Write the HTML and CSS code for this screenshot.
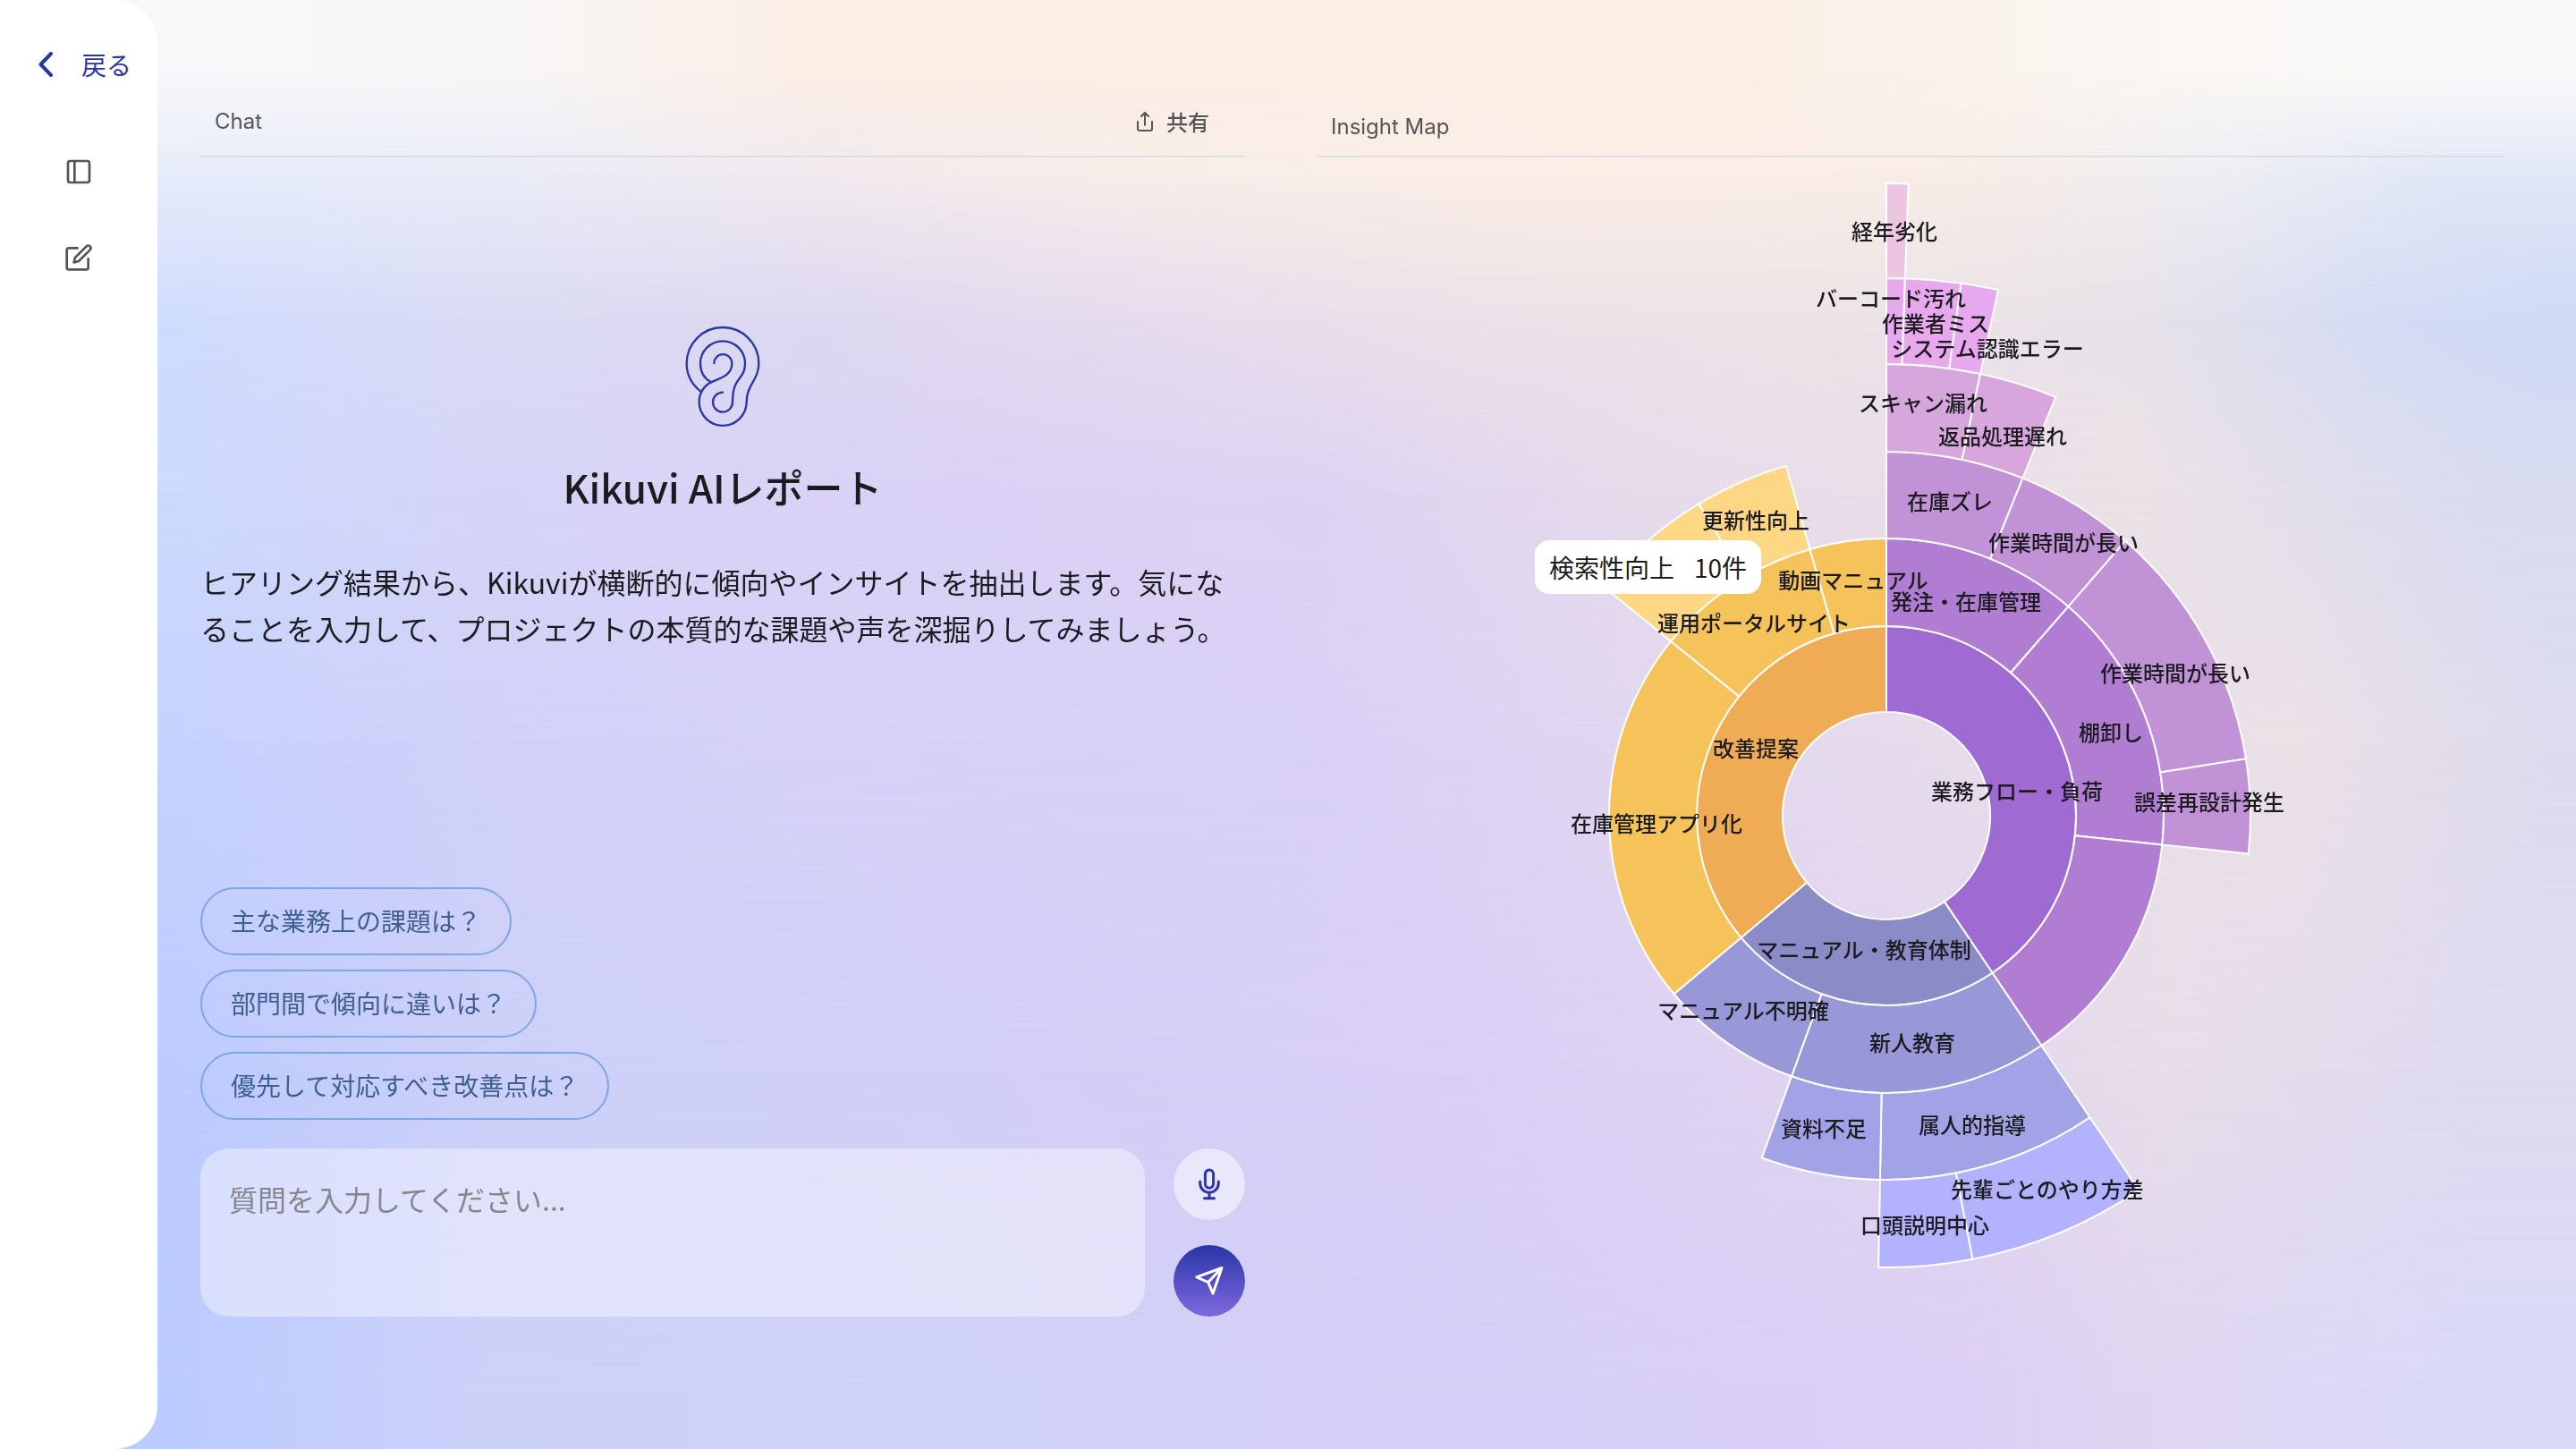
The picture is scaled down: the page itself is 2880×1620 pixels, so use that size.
FILE: index.html
```html
<!DOCTYPE html>
<html lang="ja">
<head>
<meta charset="utf-8">
<meta name="viewport" content="width=device-width, initial-scale=1">
<title>Kikuvi AIレポート</title>
<link rel="stylesheet" href="styles.css">
</head>
<body>
<div class="backdrop" aria-hidden="true">
  <i class="wash wash-1"></i>
  <i class="wash wash-2"></i>
  <i class="wash wash-3"></i>
  <i class="wash wash-4"></i>
  <i class="wash wash-5"></i>
  <i class="wash wash-6"></i>
  <i class="wash wash-7"></i>
</div>
<div class="app">
  <nav class="sidebar">
    <a class="back" href="#">
      <svg class="back-icon" viewBox="0 0 16 28" aria-hidden="true"><path d="M14 2 2.500 14 14 26"/></svg>
      <span>戻る</span>
    </a>
    <button class="tool" type="button" aria-label="サイドパネル">
      <svg viewBox="0 0 24 24" aria-hidden="true"><rect x="3" y="3" width="18" height="18" rx="1.800"/><path d="M8.500 3v18"/></svg>
    </button>
    <button class="tool" type="button" aria-label="新規チャット">
      <svg viewBox="0 0 24 24" aria-hidden="true"><path d="M11 4H3.500A1.500 1.500 0 0 0 2 5.500v15A1.500 1.500 0 0 0 3.500 22h15a1.500 1.500 0 0 0 1.500-1.500V13"/><path d="M18.500 2.500a2.121 2.121 0 0 1 3 3L12 15l-4 1 1-4z"/></svg>
    </button>
  </nav>

  <main class="content">
    <section class="panel chat">
      <header class="panel-head">
        <h2 class="panel-title">Chat</h2>
        <button class="share" type="button">
          <svg viewBox="0 0 24 24" aria-hidden="true"><path d="M4 12v8a2 2 0 0 0 2 2h12a2 2 0 0 0 2-2v-8M12 16V2M8 6l4-4 4 4"/></svg>
          共有
        </button>
      </header>

      <div class="intro">
        <svg class="ear" viewBox="78 72 252 342" aria-hidden="true">
          <path d="M130 293C101 270 83 236 83 199A121 121 0 0 1 325 199C325 255 284 270 284 328A79.500 79.500 0 0 1 125 328C125 300 140 274 165 262C195 248 235 240 235 199A30 30 0 0 0 175 198"/>
          <path d="M165 262C142 250 129 226 129 199A75 75 0 0 1 279 199C279 256 237 240 237 328A33 33 0 1 1 204 296"/>
        </svg>
        <h1 class="title">Kikuvi AIレポート</h1>
        <p class="lead">ヒアリング結果から、Kikuviが横断的に傾向やインサイトを抽出します。気になることを入力して、プロジェクトの本質的な課題や声を深掘りしてみましょう。</p>
      </div>

      <div class="suggestions">
        <button class="chip" type="button">主な業務上の課題は？</button>
        <button class="chip" type="button">部門間で傾向に違いは？</button>
        <button class="chip" type="button">優先して対応すべき改善点は？</button>
      </div>

      <form class="composer">
        <textarea class="question" aria-label="質問" placeholder="質問を入力してください..."></textarea>
        <div class="actions">
          <button class="round mic" type="button" aria-label="音声入力">
            <svg viewBox="0 0 40 40" aria-hidden="true"><rect x="15.400" y="4" width="9.200" height="20.200" rx="4.600"/><path d="M9.700 17v2a10.300 10.300 0 0 0 20.600 0v-2M20 29.500v6M14.500 35.700h11"/></svg>
          </button>
          <button class="round send" type="submit" aria-label="送信">
            <svg viewBox="0 0 40 40" aria-hidden="true"><path d="M34 5.500 5.800 15.800l12.900 5.700L24 34.200zM34 5.500 18.700 21.500"/></svg>
          </button>
        </div>
      </form>
    </section>

    <section class="panel map">
      <header class="panel-head map-head">
        <h2 class="panel-title">Insight Map</h2>
      </header>
      <div class="chart">
        <svg class="sunburst" id="sunburst" viewBox="-637 -736 1328 1290" role="img" aria-label="Insight Map"></svg>
        <div class="tooltip"><span>検索性向上</span><span>10件</span></div>
      </div>
    </section>
  </main>
</div>
<script src="chart.js"></script>
</body>
</html>
```
FILE: styles.css
```css
* {
  box-sizing: border-box;
}

body {
  margin: 0;
  color: #1c1c20;
  font-family: "Noto Sans CJK JP", "Noto Sans", sans-serif;
  background: #d6d0f6;
}

button,
textarea {
  margin: 0;
  padding: 0;
  border: 0;
  background: none;
  color: inherit;
  font: inherit;
}

button {
  cursor: pointer;
}

svg {
  display: block;
  fill: none;
  stroke: currentColor;
  stroke-linecap: round;
  stroke-linejoin: round;
}

/* Background: horizontal colour bands that fade into each other downwards */
.backdrop {
  position: fixed;
  inset: 0;
  z-index: -1;
}

.wash {
  position: absolute;
  inset: 0;
}

.wash-1 {
  background: linear-gradient(90deg, #f8f8fa 6%, #f8f6f6 20%, #fbeee4 32%, #fbeee5 51%, #fbefe4 68%, #faf6f2 82%, #fafafa 95%);
}

.wash-2 {
  background: linear-gradient(90deg, #e6ecfa 7%, #e9ecf7 19%, #f1eaee 32%, #f8ede8 45%, #fbeee5 62%, #f8ede6 76%, #edeef3 86%, #e0e7f5 95%);
  mask-image: linear-gradient(transparent 5%, #000 12%);
}

.wash-3 {
  background: linear-gradient(90deg, #cfdcfd 7%, #dadbf4 19%, #ddd8f0 32%, #e6dced 45%, #ece1e7 57%, #ede3e6 70%, #e7e2e8 83%, #d4dcf4 92%, #cedaf6 99%);
  mask-image: linear-gradient(transparent 12%, #000 22%);
}

.wash-4 {
  background: linear-gradient(90deg, #cddafe 7%, #d6d5f7 19%, #dad1f5 38%, #dcd3f3 51%, #e6dbea 64%, #ebe2e6 83%, #d9dcf0 96%);
  mask-image: linear-gradient(transparent 22%, #000 34%);
}

.wash-5 {
  background: linear-gradient(90deg, #c6d2fe 7%, #d1d1f8 19%, #d6d1f7 32%, #d9d0f6 51%, #e4daed 70%, #ebe1e6 89%, #dddbee 99%);
  mask-image: linear-gradient(transparent 34%, #000 51%);
}

.wash-6 {
  background: linear-gradient(90deg, #bdcbff 7%, #ccd0f8 19%, #d0d0f7 32%, #d5cef6 45%, #dacff6 57%, #e2d6ee 76%, #e7dee8 84%, #dfdaf0 96%);
  mask-image: linear-gradient(transparent 51%, #000 74%);
}

.wash-7 {
  background: linear-gradient(90deg, #bccbff 7%, #ccd1f8 19%, #cfd1f7 38%, #d5cef6 57%, #dbcff5 76%, #dfd5f1 83%, #dad9f8 94%);
  mask-image: linear-gradient(transparent 74%, #000 96%);
}

.app {
  display: flex;
  min-height: 100vh;
}

/* Sidebar */
.sidebar {
  display: flex;
  flex: 0 0 176px;
  flex-direction: column;
  align-items: center;
  gap: 64px;
  padding-top: 52px;
  border-radius: 0 48px 48px 0;
  background: #fff;
  color: #555;
}

.back {
  display: flex;
  align-self: stretch;
  align-items: center;
  gap: 32px;
  height: 40px;
  margin-bottom: 20px;
  padding-left: 43px;
  color: #2a36a5;
  font-size: 28px;
  line-height: 40px;
  text-decoration: none;
  white-space: nowrap;
}

.back-icon {
  flex: none;
  width: 16px;
  height: 28px;
  stroke-width: 4;
}

.tool svg {
  width: 32px;
  height: 32px;
  stroke-width: 2;
}

/* Two main panels */
.content {
  display: grid;
  flex: 1;
  grid-template-columns: 1168fr 1328fr;
  gap: 80px;
  padding: 96px 80px 148px 48px;
}

.panel {
  display: flex;
  flex-direction: column;
  min-width: 0;
}

.panel-head {
  display: flex;
  align-items: center;
  justify-content: space-between;
  height: 80px;
  padding: 2px 40px 0 16px;
  border-bottom: 2px solid #dddfe2;
  color: #555;
}

.map-head {
  padding-top: 14px;
}

.panel-title {
  margin: 0;
  font-family: Inter, "Noto Sans CJK JP", sans-serif;
  font-size: 24px;
  font-weight: 400;
  line-height: 32px;
}

.share {
  display: flex;
  align-items: center;
  gap: 12px;
  font-size: 24px;
  font-weight: 500;
  line-height: 32px;
}

.share svg {
  width: 24px;
  height: 24px;
  stroke-width: 2;
}

/* Introduction */
.intro {
  display: flex;
  flex-direction: column;
  align-items: center;
  padding-top: 188px;
}

.ear {
  width: 84px;
  height: 114px;
  color: #2a36a5;
  stroke-width: 7;
}

.title {
  margin: 32px 0 46px;
  font-size: 44px;
  font-weight: 500;
  line-height: 68px;
}

.lead {
  margin: 0;
  font-size: 32px;
  line-height: 52px;
}

/* Suggested questions */
.suggestions {
  display: flex;
  flex-direction: column;
  align-items: flex-start;
  gap: 16px;
  margin-top: auto;
  padding-top: 64px;
}

.chip {
  height: 76px;
  padding: 0 32px 2px;
  border: 2px solid #7da7e4;
  border-radius: 38px;
  color: #3f5f91;
  font-size: 28px;
  line-height: 40px;
}

/* Message composer */
.composer {
  display: flex;
  gap: 32px;
  margin-top: 32px;
}

.question {
  flex: 1;
  min-width: 0;
  padding: 30px 32px;
  border-radius: 32px;
  background: rgba(255, 255, 255, 0.4);
  font-size: 32px;
  line-height: 52px;
  resize: none;
}

.question::placeholder {
  color: #86868c;
  opacity: 1;
}

.actions {
  display: flex;
  flex-direction: column;
  gap: 28px;
}

.round {
  display: grid;
  place-items: center;
  width: 80px;
  height: 80px;
  border-radius: 50%;
}

.round svg {
  width: 40px;
  height: 40px;
  stroke-width: 3;
}

.mic {
  background: rgba(255, 255, 255, 0.5);
  color: #2a36a5;
}

.send {
  background: linear-gradient(#2836a6, #8068e0);
  color: #fff;
}

/* Sunburst */
.chart {
  position: relative;
}

.sunburst {
  width: 100%;
  height: auto;
}

.segment {
  stroke: #fff;
  stroke-width: 2;
  stroke-linejoin: miter;
}

.label {
  fill: #1c1c20;
  stroke: none;
  font-size: 24px;
  font-weight: 500;
  text-anchor: middle;
}

.tooltip {
  position: absolute;
  top: 428px;
  left: 244px;
  display: flex;
  gap: 22px;
  padding: 10px 16px;
  border-radius: 16px;
  background: #fff;
  font-size: 28px;
  line-height: 40px;
  white-space: nowrap;
}
```
FILE: chart.js
```js
// Ring edges, from the hole outwards.
const RINGS = [116, 212, 310, 407, 505, 601, 707];

// ring, start angle, end angle (degrees clockwise from the top), fill
const SEGMENTS = [
  [0, 0, 146, "#a06ad3"],
  [0, 146, 230, "#8b8bc7"],
  [0, 230, 360, "#f0ab55"],
  [1, 0, 41, "#b07dd2"],
  [1, 41, 96, "#b07dd2"],
  [1, 96, 146, "#b07dd2"],
  [1, 146, 200, "#9898d9"],
  [1, 200, 230, "#9898d9"],
  [1, 230, 309, "#f6c25a"],
  [1, 309, 344, "#f6c25a"],
  [1, 344, 360, "#f6c25a"],
  [2, 0, 22, "#c193d6"],
  [2, 22, 41, "#c193d6"],
  [2, 41, 81, "#c193d6"],
  [2, 81, 96, "#c193d6"],
  [2, 146, 181, "#a2a2e7"],
  [2, 181, 200, "#a2a2e7"],
  [2, 309, 329, "#fed785"],
  [2, 329, 344, "#fed785"],
  [3, 0, 12, "#d6a6dc"],
  [3, 12, 22, "#d6a6dc"],
  [3, 146, 169, "#b2b2ff"],
  [3, 169, 181, "#b2b2ff"],
  [4, 0, 2, "#e8a8ee"],
  [4, 2, 8, "#e8a8ee"],
  [4, 8, 12, "#e8a8ee"],
  [5, 0, 2, "#ecc5e1"]
];

// text, centre x, centre y, measured from the middle of the chart
const LABELS = [
  ["経年劣化", 9, -653],
  ["バーコード汚れ", 5, -578],
  ["作業者ミス", 55, -550],
  ["システム認識エラー", 113, -522],
  ["スキャン漏れ", 41, -461],
  ["返品処理遅れ", 130, -424],
  ["在庫ズレ", 71, -351],
  ["作業時間が長い", 198, -305],
  ["発注・在庫管理", 89, -239],
  ["作業時間が長い", 323, -159],
  ["棚卸し", 251, -93],
  ["業務フロー・負荷", 146, -27],
  ["誤差再設計発生", 361, -15],
  ["更新性向上", -146, -330],
  ["動画マニュアル", -37, -263],
  ["運用ポータルサイト", -148, -215],
  ["改善提案", -146, -75],
  ["在庫管理アプリ化", -257, 9],
  ["マニュアル・教育体制", -25, 150],
  ["マニュアル不明確", -160, 218],
  ["新人教育", 29, 254],
  ["資料不足", -70, 350],
  ["属人的指導", 96, 346],
  ["先輩ごとのやり方差", 180, 418],
  ["口頭説明中心", 43, 458]
];

const SVG_NS = "http://www.w3.org/2000/svg";
const chart = document.getElementById("sunburst");

function point(radius, degrees) {
  const a = degrees * Math.PI / 180;
  return (radius * Math.sin(a)).toFixed(2) + " " + (-radius * Math.cos(a)).toFixed(2);
}

for (const [ring, from, to, fill] of SEGMENTS) {
  const inner = RINGS[ring];
  const outer = RINGS[ring + 1];
  const path = document.createElementNS(SVG_NS, "path");
  path.setAttribute("class", "segment");
  path.setAttribute("fill", fill);
  path.setAttribute("d",
    `M${point(inner, from)}L${point(outer, from)}` +
    `A${outer} ${outer} 0 0 1 ${point(outer, to)}` +
    `L${point(inner, to)}A${inner} ${inner} 0 0 0 ${point(inner, from)}Z`);
  chart.appendChild(path);
}

for (const [text, x, y] of LABELS) {
  const label = document.createElementNS(SVG_NS, "text");
  label.setAttribute("class", "label");
  label.setAttribute("x", x);
  label.setAttribute("y", y);
  label.setAttribute("dy", "9");
  label.textContent = text;
  chart.appendChild(label);
}
```
